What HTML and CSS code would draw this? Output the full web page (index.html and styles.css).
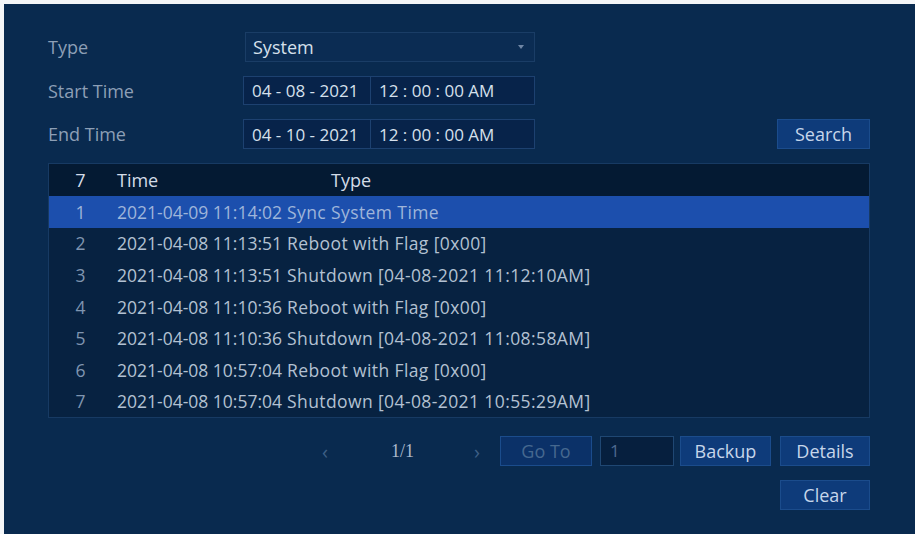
FILE: index.html
```html
<!DOCTYPE html>
<html lang="en">
<head>
  <meta charset="UTF-8">
  <title>System Log</title>
  <link rel="stylesheet" href="styles.css">
</head>
<body>

  <div class="panel">
    <div class="form-row row-type">
      <span class="label">Type</span>
      <div class="select">
        <span>System</span>
        <span class="caret"></span>
      </div>
    </div>

    <div class="form-row row-start">
      <span class="label">Start Time</span>
      <div class="datetime">
        <span class="date">04 - 08 - 2021</span>
        <span class="time">12 : 00 : 00 AM</span>
      </div>
    </div>

    <div class="form-row row-end">
      <span class="label">End Time</span>
      <div class="datetime">
        <span class="date">04 - 10 - 2021</span>
        <span class="time">12 : 00 : 00 AM</span>
      </div>
      <button class="btn search">Search</button>
    </div>

    <div class="log-table">
      <div class="log-row head">
        <span class="num">7</span>
        <span class="when">Time</span>
        <span class="what">Type</span>
      </div>
      <div class="log-row selected">
        <span class="num">1</span>
        <span class="when">2021-04-09 11:14:02</span>
        <span class="what">Sync System Time</span>
      </div>
      <div class="log-row">
        <span class="num">2</span>
        <span class="when">2021-04-08 11:13:51</span>
        <span class="what">Reboot with Flag [0x00]</span>
      </div>
      <div class="log-row">
        <span class="num">3</span>
        <span class="when">2021-04-08 11:13:51</span>
        <span class="what">Shutdown [04-08-2021 11:12:10AM]</span>
      </div>
      <div class="log-row">
        <span class="num">4</span>
        <span class="when">2021-04-08 11:10:36</span>
        <span class="what">Reboot with Flag [0x00]</span>
      </div>
      <div class="log-row">
        <span class="num">5</span>
        <span class="when">2021-04-08 11:10:36</span>
        <span class="what">Shutdown [04-08-2021 11:08:58AM]</span>
      </div>
      <div class="log-row">
        <span class="num">6</span>
        <span class="when">2021-04-08 10:57:04</span>
        <span class="what">Reboot with Flag [0x00]</span>
      </div>
      <div class="log-row">
        <span class="num">7</span>
        <span class="when">2021-04-08 10:57:04</span>
        <span class="what">Shutdown [04-08-2021 10:55:29AM]</span>
      </div>
    </div>

    <div class="pager">
      <span class="arrow prev">&lsaquo;</span>
      <span class="pages">1/1</span>
      <span class="arrow next">&rsaquo;</span>
      <button class="btn goto">Go To</button>
      <span class="page-input">1</span>
      <button class="btn backup">Backup</button>
      <button class="btn details">Details</button>
    </div>

    <div class="bottom">
      <button class="btn">Clear</button>
    </div>
  </div>

</body>
</html>
```

FILE: styles.css
```css
* {
  margin: 0;
  padding: 0;
  box-sizing: border-box;
  font-family: "Open Sans", "Noto Sans", sans-serif;
}

body {
  background: #f4f6f8;
  width: 915px;
  height: 534px;
  overflow: hidden;
}

.panel {
  margin: 4px 0 0 4px;
  height: 530px;
  background: #092a4f;
  padding: 28px 44px 0 44px;
  color: #c9d5e3;
  font-size: 18px;
}

.form-row {
  display: flex;
  align-items: center;
}

.label {
  width: 197px;
  color: #8d9fb6;
  font-size: 18px;
}

.row-type {
  height: 30px;
}

.row-start {
  height: 29px;
  margin-top: 14px;
}

.row-end {
  height: 30px;
  margin-top: 14px;
}

.select {
  width: 290px;
  height: 30px;
  border: 1px solid #1a3d66;
  background: #0b2c53;
  display: flex;
  align-items: center;
  justify-content: space-between;
  padding: 0 10px 0 7px;
  color: #d6e0ec;
}

.caret {
  width: 0;
  height: 0;
  border-left: 3px solid transparent;
  border-right: 3px solid transparent;
  border-top: 4px solid #6f86a5;
}

.datetime {
  display: flex;
  height: 100%;
  width: 292px;
  margin-left: -2px;
  border: 1px solid #1d4170;
  background: #07234a;
  color: #d6e0ec;
  font-size: 17px;
}

.datetime span {
  display: flex;
  align-items: center;
  padding-left: 8px;
  white-space: pre;
}

.date {
  width: 127px;
  border-right: 1px solid #1d4170;
}

.time {
  padding-left: 9px;
}

.btn {
  background: #0e3b7a;
  border: 1px solid #1b4c8c;
  color: #c6d6ea;
  font-size: 18px;
  height: 30px;
  width: 91px;
  cursor: pointer;
}

.search {
  margin-left: auto;
  margin-right: 1px;
  width: 93px;
}

.log-table {
  margin-top: 14px;
  width: 822px;
  border: 1px solid #173a63;
  background: #072241;
}

.log-row {
  display: flex;
  align-items: center;
  height: 31.6px;
  color: #b3c1d2;
  font-size: 17.5px;
  white-space: nowrap;
}

.log-row.head {
  height: 32px;
  background: #041a33;
  color: #d3dce8;
  font-size: 18px;
}

.log-row.selected {
  background: #1c4fad;
  color: #9fb5da;
}

.num {
  width: 63px;
  text-align: center;
  color: #7f95b0;
}

.head .num {
  color: #d3dce8;
}

.selected .num {
  color: #9fb5da;
}

.when {
  width: 175px;
  padding-left: 5px;
}

.what {
  letter-spacing: 0.4px;
}

.head .what {
  padding-left: 44px;
  letter-spacing: 0;
}

.pager {
  display: flex;
  align-items: center;
  justify-content: flex-end;
  margin-top: 18px;
  width: 822px;
  height: 30px;
}

.arrow {
  color: #3e5f86;
  font-size: 20px;
}

.pages {
  margin: 0 60px 0 63px;
  color: #aab9cc;
  font-family: "Liberation Serif", serif;
  font-size: 18px;
}

.next {
  margin-right: 20px;
}

.goto {
  width: 92px;
  color: #46688f;
  background: #0b3168;
}

.page-input {
  width: 74px;
  height: 30px;
  margin-left: 8px;
  border: 1px solid #1f4773;
  background: #061f3e;
  color: #4d6a8f;
  padding-left: 9px;
  line-height: 28px;
  font-size: 17px;
}

.backup {
  margin-left: 6px;
}

.details {
  margin-left: 9px;
  width: 90px;
}

.bottom {
  display: flex;
  justify-content: flex-end;
  margin-top: 14px;
  width: 822px;
}

.bottom .btn {
  width: 90px;
}
```
